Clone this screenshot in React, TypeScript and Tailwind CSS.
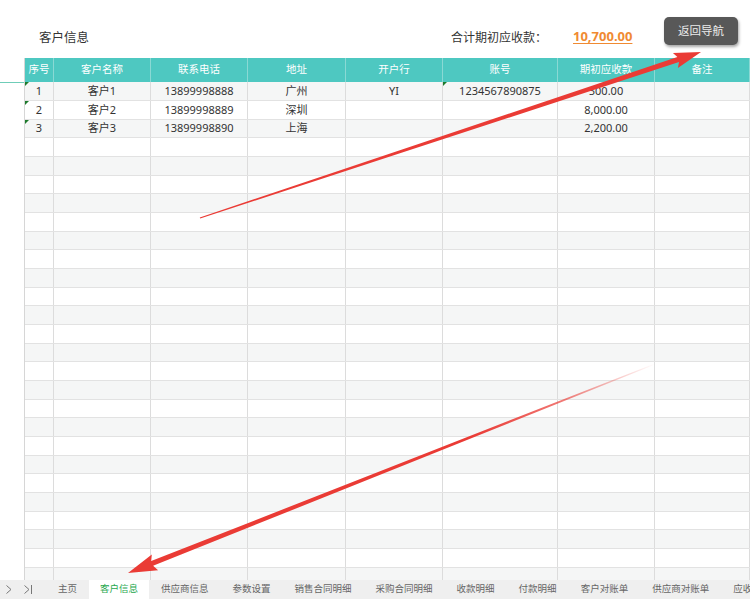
import React from "react";

const columns = [
   { name: "序号", w: "w-[29px]" },
   { name: "客户名称", w: "w-[97px]" },
   { name: "联系电话", w: "w-[97px]" },
   { name: "地址", w: "w-[98px]" },
   { name: "开户行", w: "w-[97px]" },
   { name: "账号", w: "w-[115px]" },
   { name: "期初应收款", w: "w-[97px]" },
   { name: "备注", w: "flex-1" },
];

const data = [
   ["1", "客户1", "13899998888", "广州", "YI", "1234567890875", "500.00", ""],
   ["2", "客户2", "13899998889", "深圳", "", "", "8,000.00", ""],
   ["3", "客户3", "13899998890", "上海", "", "", "2,200.00", ""],
];

// cells that carry the little green "number stored as text" flag
const flagged = ["0-0", "1-0", "2-0", "0-5"];

const tabs = [
   "主页",
   "客户信息",
   "供应商信息",
   "参数设置",
   "销售合同明细",
   "采购合同明细",
   "收款明细",
   "付款明细",
   "客户对账单",
   "供应商对账单",
   "应收账款",
];

const rowHeights = ["h-[19px]", "h-[19px]", "h-[18px]"];

function arrowPoints(
   tx: number,
   ty: number,
   px: number,
   py: number,
   headLen: number,
   headHalf: number,
   tailHalf: number,
   baseHalf: number
) {
   const dx = px - tx;
   const dy = py - ty;
   const len = Math.sqrt(dx * dx + dy * dy);
   const ux = dx / len;
   const uy = dy / len;
   const nx = -uy;
   const ny = ux;
   const bx = px - ux * headLen;
   const by = py - uy * headLen;
   const pts = [
      [tx + nx * tailHalf, ty + ny * tailHalf],
      [bx + nx * baseHalf, by + ny * baseHalf],
      [bx - ux * 3 + nx * headHalf, by - uy * 3 + ny * headHalf],
      [px, py],
      [bx - ux * 3 - nx * headHalf, by - uy * 3 - ny * headHalf],
      [bx - nx * baseHalf, by - ny * baseHalf],
      [tx - nx * tailHalf, ty - ny * tailHalf],
   ];
   return pts.map((p) => p[0].toFixed(1) + "," + p[1].toFixed(1)).join(" ");
}

function Arrows() {
   return (
      <svg
         className="absolute inset-0 pointer-events-none"
         width="750"
         height="599"
         viewBox="0 0 750 599"
      >
         <defs>
            <linearGradient
               id="fade2"
               gradientUnits="userSpaceOnUse"
               x1="655"
               y1="364"
               x2="128"
               y2="573"
            >
               <stop offset="0" stopColor="#ea3b35" stopOpacity="0" />
               <stop offset="0.18" stopColor="#ea3b35" stopOpacity="0.7" />
               <stop offset="0.35" stopColor="#ea3b35" stopOpacity="1" />
            </linearGradient>
         </defs>
         <polygon
            points={arrowPoints(200, 218, 701, 52, 24, 8, 0.6, 2.6)}
            fill="#ea3b35"
         />
         <polygon
            points={arrowPoints(655, 364, 128, 573, 26, 8.5, 0.5, 2.6)}
            fill="url(#fade2)"
         />
      </svg>
   );
}

function Flag() {
   return (
      <span className="absolute left-0 top-0 w-0 h-0 border-t-[4px] border-t-[#1d7a2c] border-r-[4px] border-r-transparent" />
   );
}

export default function App() {
   const blank = Array.from({ length: 24 }, () => ["", "", "", "", "", "", "", ""]);
   const rows = [...data, ...blank];

   return (
      <div className="relative w-[750px] h-[599px] overflow-hidden bg-white flex flex-col text-[#333] font-['Noto_Sans','Noto_Sans_CJK_SC',sans-serif]">
         {/* title bar */}
         <div className="h-[58px] flex items-start shrink-0">
            <div className="w-[451px] pl-[39px] pt-[29px] text-[12.5px] leading-[18px]">
               客户信息
            </div>
            <div className="w-[122px] pt-[29px] text-[12px] leading-[18px]">
               合计期初应收款：
            </div>
            <div className="w-[91px] pt-[27px] text-[13px] leading-[18px] font-bold text-[#f08a32] underline underline-offset-2">
               10,700.00
            </div>
            <div className="mt-[17px] w-[74px] h-[28px] rounded-[5px] bg-[#585858] text-[#ececec] text-[11.5px] flex items-center justify-center shadow-[1px_2px_3px_rgba(0,0,0,0.35)]">
               返回导航
            </div>
         </div>

         {/* sheet */}
         <div className="flex flex-1 overflow-hidden">
            <div className="w-[24px] shrink-0">
               <div className="h-[25px] border-b border-[#6fcdb8]" />
            </div>
            <div className="flex-1 flex flex-col border-l border-[#d6d6d6]">
               <div className="flex h-[24px] shrink-0 bg-[#4ec8c1] text-white text-[10.5px]">
                  {columns.map((c) => (
                     <div
                        key={c.name}
                        className={`${c.w} shrink-0 flex items-center justify-center border-r border-[#8ad9d4]`}
                     >
                        {c.name}
                     </div>
                  ))}
               </div>
               {rows.map((r, i) => (
                  <div
                     key={i}
                     className={`flex shrink-0 text-[11px] border-b border-[#e2e2e2] ${rowHeights[i % 3]} ${i % 2 === 0 ? "bg-[#f5f6f6]" : "bg-white"}`}
                  >
                     {columns.map((c, j) => (
                        <div
                           key={j}
                           className={`${c.w} shrink-0 relative flex items-center justify-center border-r border-[#dcdcdc]`}
                        >
                           {flagged.includes(i + "-" + j) && <Flag />}
                           {r[j]}
                        </div>
                     ))}
                  </div>
               ))}
            </div>
         </div>

         {/* sheet tabs */}
         <div className="h-[19px] shrink-0 flex bg-[#efefef] text-[9.5px] text-[#666] whitespace-nowrap">
            <div className="w-[46px] shrink-0 flex items-center pl-[5px] gap-[10px]">
               <svg width="8" height="9" viewBox="0 0 8 9">
                  <path d="M1.5 0.5 L6 4.5 L1.5 8.5" fill="none" stroke="#777" strokeWidth="1" />
               </svg>
               <svg width="10" height="9" viewBox="0 0 10 9">
                  <path d="M1.5 0.5 L6 4.5 L1.5 8.5" fill="none" stroke="#777" strokeWidth="1" />
                  <path d="M8.5 0 L8.5 9" stroke="#777" strokeWidth="1" />
               </svg>
            </div>
            {tabs.map((t) => (
               <div
                  key={t}
                  className={
                     t === "客户信息"
                        ? "px-[11px] flex items-center bg-white text-[#27a84e]"
                        : "px-3 flex items-center"
                  }
               >
                  {t}
               </div>
            ))}
         </div>

         <Arrows />
      </div>
   );
}
